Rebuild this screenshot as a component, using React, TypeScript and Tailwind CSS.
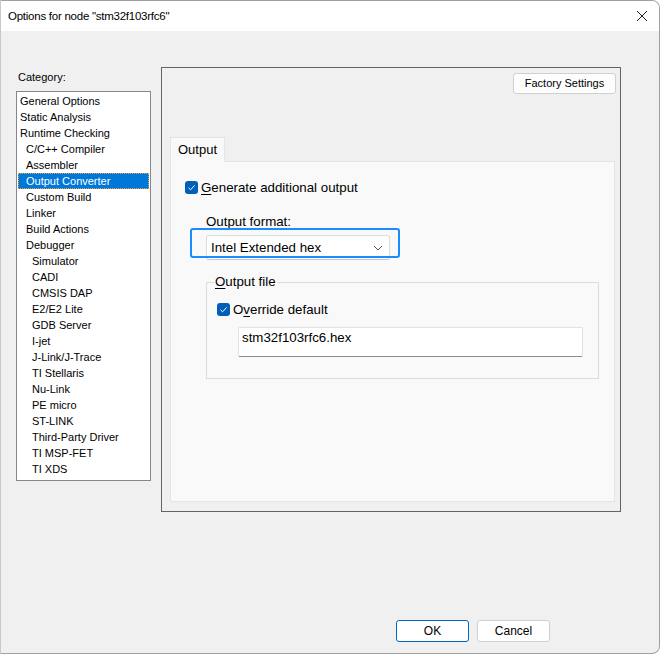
import React from "react";

const items: [string, number][] = [
  ["General Options", 0],
  ["Static Analysis", 0],
  ["Runtime Checking", 0],
  ["C/C++ Compiler", 1],
  ["Assembler", 1],
  ["Output Converter", 1],
  ["Custom Build", 1],
  ["Linker", 1],
  ["Build Actions", 1],
  ["Debugger", 1],
  ["Simulator", 2],
  ["CADI", 2],
  ["CMSIS DAP", 2],
  ["E2/E2 Lite", 2],
  ["GDB Server", 2],
  ["I-jet", 2],
  ["J-Link/J-Trace", 2],
  ["TI Stellaris", 2],
  ["Nu-Link", 2],
  ["PE micro", 2],
  ["ST-LINK", 2],
  ["Third-Party Driver", 2],
  ["TI MSP-FET", 2],
  ["TI XDS", 2],
];

const indentCls = ["pl-[3px]", "pl-[9px]", "pl-[15px]"];

function Check() {
  return (
    <span className="w-[13px] h-[13px] rounded-[3px] bg-[#005fb8] flex items-center justify-center shrink-0">
      <svg width="9" height="9" viewBox="0 0 9 9">
        <path d="M1.5 4.8 L3.6 6.8 L7.6 2.4" fill="none" stroke="#ffffff" strokeWidth="1" />
      </svg>
    </span>
  );
}

export default function App() {
  return (
    <div
      className="w-[660px] h-[654px] bg-[#f0f0f0] flex flex-col border border-[#a0a0a0] border-l-[#c8c8c8] rounded-tr-[8px] rounded-br-[8px] overflow-hidden text-black"
      style={{ fontFamily: '"Liberation Sans", Arial, sans-serif' }}
    >
      {/* title bar */}
      <div className="h-[30px] bg-white flex items-center justify-between shrink-0">
        <div className="pl-[7px] text-[11.5px] tracking-[-0.25px] leading-[14px]">Options for node "stm32f103rfc6"</div>
        <svg width="12" height="12" viewBox="0 0 12 12" className="mr-[11px]">
          <path d="M1 1 L11 11 M11 1 L1 11" stroke="#1a1a1a" strokeWidth="1" />
        </svg>
      </div>

      <div className="flex pt-[36px] pl-[15px] gap-[10px]">
        {/* left column */}
        <div className="flex flex-col w-[135px]">
          <div className="h-[24px] pt-[3px] pl-[2px] text-[11px] leading-[14px]">Category:</div>
          <div className="h-[390px] bg-white border border-[#828790] py-[1px] text-[11px]">
            {items.map(([name, lvl]) =>
              name === "Output Converter" ? (
                <div
                  key={name}
                  className="mx-[1px] h-[16px] leading-[14px] bg-[#0078d7] text-white border border-dotted border-[#e8a040] pl-[7px]"
                >
                  {name}
                </div>
              ) : (
                <div key={name} className={`h-[16px] leading-[16px] ${indentCls[lvl]}`}>
                  {name}
                </div>
              )
            )}
          </div>
        </div>

        {/* right panel */}
        <div className="w-[460px] h-[445px] border border-[#646464] flex flex-col">
          <div className="flex justify-end pt-[5px] pr-[4px]">
            <div className="w-[103px] h-[21px] bg-[#fdfdfd] border border-[#d0d0d0] rounded-[3px] flex items-center justify-center text-[11px]">
              Factory Settings
            </div>
          </div>

          <div className="mt-[43px] ml-[8px] mr-[5px] mb-[9px] flex-1 flex flex-col">
            <div className="w-[55px] h-[25px] bg-[#f9f9f9] border border-b-0 border-[#e5e5e5] pl-[7px] text-[13px] leading-[24px] relative z-10 -mb-px">
              Output
            </div>
            <div className="flex-1 bg-[#f9f9f9] border border-[#e5e5e5] relative text-[13.3px]">
              <div className="flex items-center h-[13px] leading-[13px] mt-[19px] ml-[14px] gap-[3px]">
                <Check />
                <span>
                  <span className="underline underline-offset-2">G</span>enerate additional output
                </span>
              </div>

              <div className="ml-[35px] mt-[20px] h-[16px] leading-[16px]">Output format:</div>
              <div className="ml-[35px] mt-[5px] w-[184px] h-[25px] bg-white border border-[#dcdcdc] border-b-[#c8c8c8] rounded-[3px] flex items-center justify-between pl-[4px] pr-[6px] leading-[16px]">
                <span>Intel Extended hex</span>
                <svg width="10" height="6" viewBox="0 0 10 6">
                  <path d="M1 1 L5 5 L9 1" fill="none" stroke="#555" strokeWidth="1" />
                </svg>
              </div>
              <div className="absolute left-[19px] top-[66px] w-[210px] h-[30px] border-2 border-[#1a8cff] rounded-[3px]" />

              <div className="ml-[35px] mt-[22px] w-[393px] h-[97px] border border-[#dcdcdc] relative">
                <div className="absolute -top-[9px] left-[7px] bg-[#f9f9f9] px-[1px] h-[16px] leading-[16px]">
                  <span className="underline underline-offset-2">O</span>utput file
                </div>
                <div className="flex items-center h-[13px] leading-[13px] mt-[20px] ml-[10px] gap-[3px]">
                  <Check />
                  <span>
                    O<span className="underline underline-offset-2">v</span>erride default
                  </span>
                </div>
                <div className="ml-[31px] mt-[11px] w-[345px] h-[30px] bg-white border border-[#e2e2e2] border-b-[#8a8a8a] rounded-[2px] pl-[3px] leading-[20px]">
                  stm32f103rfc6.hex
                </div>
              </div>
            </div>
          </div>
        </div>
      </div>

      <div className="flex-1" />
      <div className="flex justify-end gap-[8px] pr-[109px] pb-[11px] text-[12px]">
        <div className="w-[73px] h-[22px] bg-white border border-[#0067c0] rounded-[3px] flex items-center justify-center">OK</div>
        <div className="w-[73px] h-[22px] bg-white border border-[#d0d0d0] rounded-[3px] flex items-center justify-center">Cancel</div>
      </div>
    </div>
  );
}
